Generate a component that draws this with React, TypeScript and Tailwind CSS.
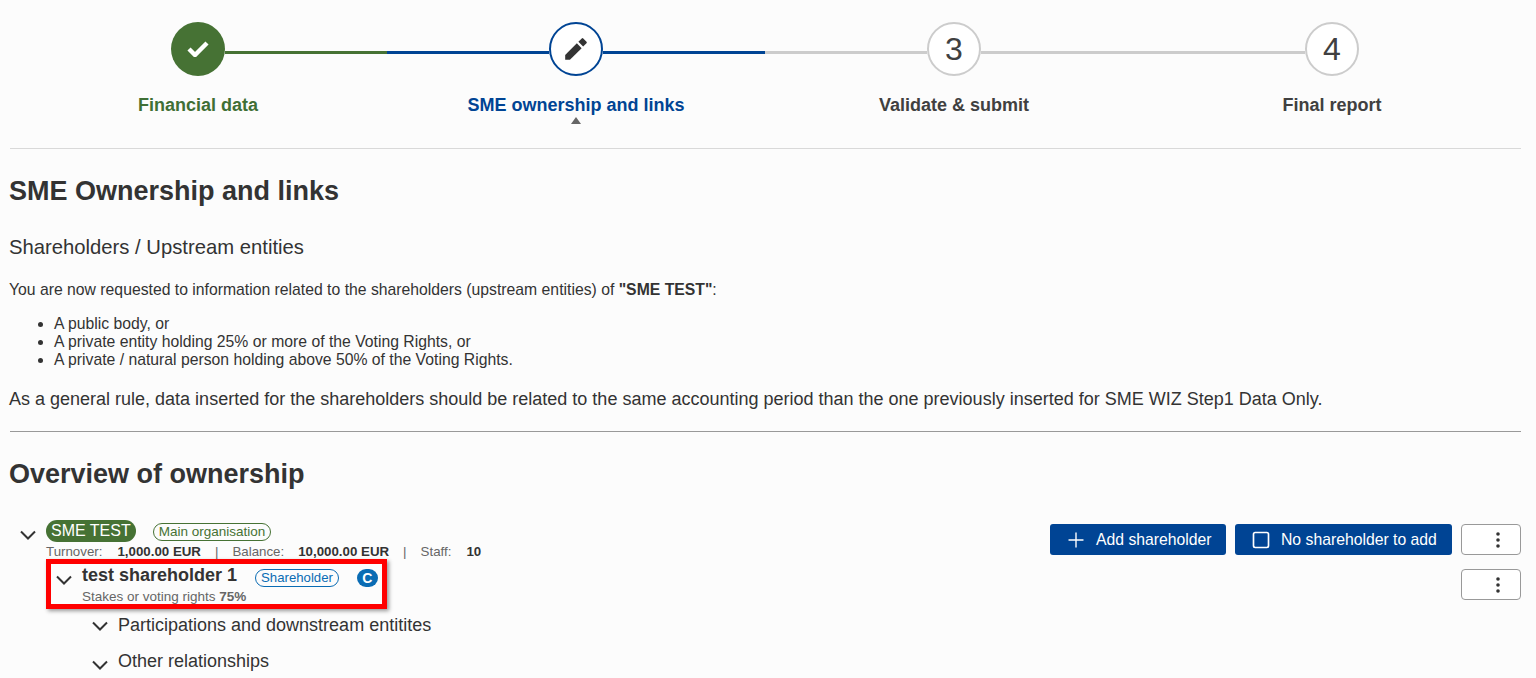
import React from "react";
import { Plus, Square } from "lucide-react";

const F = { fontFamily: '"Liberation Sans", Arial, sans-serif' };

function Chev({ className }: { className: string }) {
  return (
    <svg width="16" height="10" viewBox="0 0 16 10" fill="none" stroke="#333" strokeWidth="2" className={"shrink-0 " + className}>
      <path d="M1 1.5 L8 8.5 L15 1.5" />
    </svg>
  );
}

function Step({ label, color, circle, left, right, mark }: { label: string; color: string; circle: React.ReactNode; left?: string; right?: string; mark?: boolean }) {
  return (
    <div className="flex flex-col items-center">
      <div className="flex w-full h-[54px]">
        <div className="flex-1 h-[3px] mt-[29px]" style={{ backgroundColor: left ?? "transparent" }} />
        {circle}
        <div className="flex-1 h-[3px] mt-[29px]" style={{ backgroundColor: right ?? "transparent" }} />
      </div>
      <div className="mt-[18px] h-[22px] text-[18px] leading-[22px] font-bold" style={{ color }}>{label}</div>
      {mark && <div className="mt-[1px] w-0 h-0 border-x-[5px] border-x-transparent border-b-[7px] border-b-[#666]" />}
    </div>
  );
}

function Num({ n }: { n: string }) {
  return (
    <div className="w-[54px] h-[54px] rounded-full border-2 border-[#ccc] bg-white flex items-center justify-center text-[32px] text-[#404040] shrink-0">{n}</div>
  );
}

function MoreBtn() {
  return (
    <div className="w-[60px] h-[31px] rounded-[4px] border border-[#999] bg-white flex items-center justify-center pl-[14px]">
      <svg width="4" height="16" viewBox="0 0 4 16" fill="#333">
        <circle cx="2" cy="2" r="1.8" />
        <circle cx="2" cy="8" r="1.8" />
        <circle cx="2" cy="14" r="1.8" />
      </svg>
    </div>
  );
}

export default function App() {
  return (
    <div className="h-[678px] overflow-hidden bg-[#fcfcfc] text-[#333] pl-[9px] pr-[15px]" style={F}>
      <div className="grid grid-cols-4 pt-[22px] h-[148px]">
        <Step label="Financial data" color="#3f6f35" right="#467234"
          circle={
            <div className="w-[54px] h-[54px] rounded-full bg-[#467234] flex items-center justify-center shrink-0">
              <svg width="22" height="16" viewBox="0 0 22 16" fill="none" stroke="#fff" strokeWidth="4.4">
                <path d="M2 8 L8 14 L20 2" />
              </svg>
            </div>
          } />
        <Step label="SME ownership and links" color="#004494" left="#004494" right="#004494" mark
          circle={
            <div className="w-[54px] h-[54px] rounded-full border-2 border-[#004494] bg-white flex items-center justify-center shrink-0">
              <svg width="26" height="26" viewBox="0 0 24 24" fill="#333">
                <path d="M2 17.6V22h4.4L17.2 11.2l-4.4-4.4L2 17.6z" />
                <path d="M14.2 5.4l4.4 4.4 3.1-3.1a1 1 0 0 0 0-1.4l-3-3a1 1 0 0 0-1.4 0l-3.1 3.1z" />
              </svg>
            </div>
          } />
        <Step label="Validate & submit" color="#404040" left="#ccc" right="#ccc" circle={<Num n="3" />} />
        <Step label="Final report" color="#404040" left="#ccc" circle={<Num n="4" />} />
      </div>

      <div className="ml-[1px] border-t border-[#d9d9d9]">
        <h1 className="-ml-[1px] mt-[26px] text-[27px] leading-[32px] font-bold">SME Ownership and links</h1>
        <h2 className="-ml-[1px] mt-[28px] text-[20.25px] leading-[24px] font-normal">Shareholders / Upstream entities</h2>
        <p className="-ml-[1px] mt-[21px] text-[15.75px] leading-[20px]">You are now requested to information related to the shareholders (upstream entities) of <b>"SME TEST"</b>:</p>
        <ul className="mt-[15px] pl-[44px] list-disc text-[15.75px] leading-[18px]">
          <li>A public body, or</li>
          <li>A private entity holding 25% or more of the Voting Rights, or</li>
          <li>A private / natural person holding above 50% of the Voting Rights.</li>
        </ul>
        <p className="-ml-[1px] mt-[19px] text-[18px] leading-[22px]">As a general rule, data inserted for the shareholders should be related to the same accounting period than the one previously inserted for SME WIZ Step1 Data Only.</p>
        <div className="mt-[21px] border-t border-[#999]" />
        <h1 className="-ml-[1px] mt-[26px] text-[27px] leading-[32px] font-bold">Overview of ownership</h1>

        <div className="mt-[30px] flex justify-between">
          <div className="flex flex-col">
            <div className="flex">
              <Chev className="ml-[10px] mt-[10px]" />
              <div className="ml-[10px]">
                <div className="flex items-center h-[22px]">
                  <span className="h-[22px] px-[5px] rounded-full bg-[#467234] text-white text-[16px] leading-[22px]">SME TEST</span>
                  <span className="ml-[17px] mt-[2px] h-[18px] px-[5px] rounded-full border border-[#467234] text-[#467234] text-[13.5px] leading-[16px]">Main organisation</span>
                </div>
                <div className="mt-[1px] h-[17px] text-[13.3px] leading-[17px] whitespace-nowrap flex">
                  <span className="text-[#666]">Turnover:</span>
                  <b className="ml-[15px]">1,000.00 EUR</b>
                  <span className="ml-[14px] text-[#666]">|</span>
                  <span className="ml-[14px] text-[#666]">Balance:</span>
                  <b className="ml-[14px]">10,000.00 EUR</b>
                  <span className="ml-[14px] text-[#666]">|</span>
                  <span className="ml-[14px] text-[#666]">Staff:</span>
                  <b className="ml-[15px]">10</b>
                </div>
              </div>
            </div>

            <div className="ml-[36px] -mt-[1px] w-[341px] h-[50px] border-[5px] border-[#f00] shadow-[2px_2px_4px_rgba(0,0,0,0.4)] flex">
              <Chev className="ml-[5px] mt-[11px]" />
              <div className="ml-[10px] -mt-[1px]">
                <div className="flex items-center h-[24px]">
                  <span className="text-[18px] font-bold leading-[24px]">test shareholder 1</span>
                  <span className="ml-[18px] mt-[5px] h-[18px] px-[5px] rounded-full border border-[#0a6cb4] text-[#0a6cb4] text-[13.2px] leading-[16px]">Shareholder</span>
                  <span className="ml-[18px] mt-[5px] w-[21px] h-[18px] rounded-full bg-[#0a6cb4] text-white text-[14px] font-bold leading-[18px] text-center">C</span>
                </div>
                <div className="mt-[1px] text-[13.5px] leading-[18px] text-[#666]">Stakes or voting rights <b>75%</b></div>
              </div>
            </div>

            <div className="ml-[82px] mt-[5px] flex h-[22px]">
              <Chev className="mt-[7px]" />
              <span className="ml-[10px] text-[18px] leading-[22px]">Participations and downstream entitites</span>
            </div>
            <div className="ml-[82px] mt-[14px] flex h-[22px]">
              <Chev className="mt-[10px]" />
              <span className="ml-[10px] text-[18px] leading-[22px]">Other relationships</span>
            </div>
          </div>

          <div className="flex flex-col items-end gap-[14px] pt-[4px]">
            <div className="flex gap-[9px]">
              <div className="h-[31px] w-[176px] rounded-[3px] bg-[#004494] text-white flex items-center pl-[14px] text-[15.75px]">
                <Plus size={24} strokeWidth={1.4} />
                <span className="ml-[8px]">Add shareholder</span>
              </div>
              <div className="h-[31px] w-[217px] rounded-[3px] bg-[#004494] text-white flex items-center pl-[16px] text-[15.75px]">
                <Square size={20} strokeWidth={2} />
                <span className="ml-[10px]">No shareholder to add</span>
              </div>
              <MoreBtn />
            </div>
            <MoreBtn />
          </div>
        </div>
      </div>
    </div>
  );
}
